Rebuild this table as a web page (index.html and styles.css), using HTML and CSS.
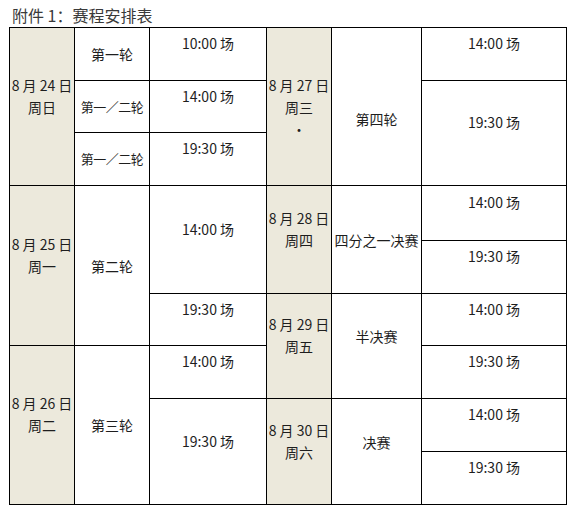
FILE: index.html
```html
<!DOCTYPE html>
<html lang="zh">
<head>
<meta charset="utf-8">
<title>赛程安排表</title>
<link rel="stylesheet" href="styles.css">
</head>
<body>
<div class="title">附件 1：赛程安排表</div>
<div class="grid">
  <div class="cell date rs3"><span>8 月 24 日</span><span>周日</span><span>&nbsp;</span></div>
  <div class="cell round">第一轮</div>
  <div class="cell time">10:00 场</div>
  <div class="cell date rs3"><span>8 月 27 日</span><span>周三</span><span>·</span></div>
  <div class="cell round rs3 low">第四轮</div>
  <div class="cell time">14:00 场</div>

  <div class="cell round small">第一／二轮</div>
  <div class="cell time">14:00 场</div>
  <div class="cell time rs2">19:30 场</div>

  <div class="cell round small">第一／二轮</div>
  <div class="cell time">19:30 场</div>

  <div class="cell date rs3"><span>8 月 25 日</span><span>周一</span><span>&nbsp;</span></div>
  <div class="cell round rs3">第二轮</div>
  <div class="cell time rs2">14:00 场</div>
  <div class="cell date rs2"><span>8 月 28 日</span><span>周四</span><span>&nbsp;</span></div>
  <div class="cell round rs2">四分之一决赛</div>
  <div class="cell time">14:00 场</div>

  <div class="cell time">19:30 场</div>

  <div class="cell time">19:30 场</div>
  <div class="cell date rs2"><span>8 月 29 日</span><span>周五</span><span>&nbsp;</span></div>
  <div class="cell round rs2 high">半决赛</div>
  <div class="cell time">14:00 场</div>

  <div class="cell date rs3"><span>8 月 26 日</span><span>周二</span><span>&nbsp;</span></div>
  <div class="cell round rs3">第三轮</div>
  <div class="cell time">14:00 场</div>
  <div class="cell time">19:30 场</div>

  <div class="cell time rs2">19:30 场</div>
  <div class="cell date rs2"><span>8 月 30 日</span><span>周六</span><span>&nbsp;</span></div>
  <div class="cell round rs2 high">决赛</div>
  <div class="cell time">14:00 场</div>

  <div class="cell time">19:30 场</div>
</div>
</body>
</html>
```

FILE: styles.css
```css
html, body {
  margin: 0;
  padding: 0;
  background: #ffffff;
}

body {
  font-family: "Noto Sans CJK SC", "Noto Sans", sans-serif;
  color: #1e1e1e;
}

.title {
  height: 27px;
  box-sizing: border-box;
  padding: 4px 0 0 12px;
  font-size: 16px;
  line-height: 23px;
  color: #3a3a3a;
}

.grid {
  margin-left: 9px;
  width: 558px;
  box-sizing: border-box;
  display: grid;
  grid-template-columns: 64px 74px 116px 64px 89px 144px;
  grid-template-rows: 52px 51px 52px 54px 52px 51px 52px 52px 52px;
  gap: 1px;
  padding: 1px;
  background: #000000;
}

.cell {
  background: #ffffff;
  display: flex;
  align-items: center;
  justify-content: center;
  text-align: center;
  font-size: 14px;
  line-height: 20px;
  white-space: nowrap;
  box-sizing: border-box;
}

.rs2 { grid-row: span 2; }
.rs3 { grid-row: span 3; }

.date {
  background: #ece9dc;
  flex-direction: column;
  line-height: 22px;
}

.date span {
  display: block;
}

.round.small {
  font-size: 13px;
  letter-spacing: -0.5px;
}

.round.low {
  padding-top: 24px;
}

.round.high {
  padding-bottom: 20px;
}

.time {
  padding-bottom: 22px;
}
```
